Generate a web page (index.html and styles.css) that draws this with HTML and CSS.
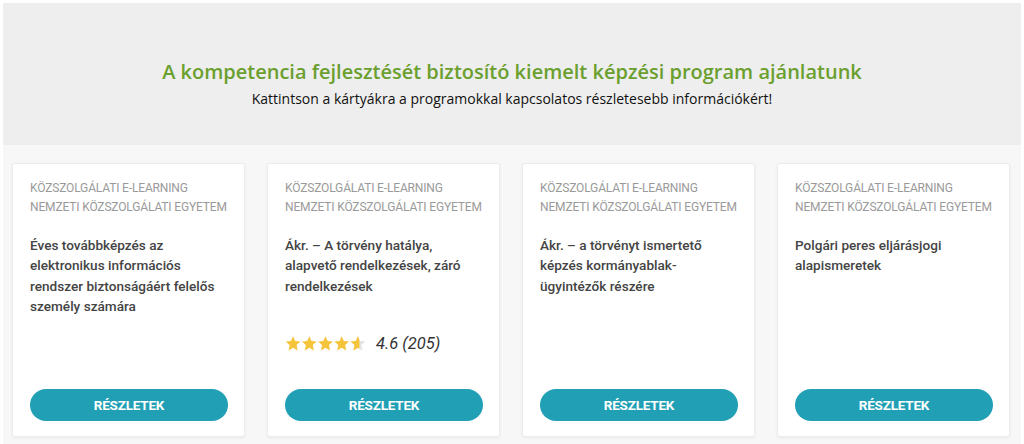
FILE: index.html
```html
<!DOCTYPE html>
<html lang="hu">
<head>
<meta charset="utf-8">
<link rel="stylesheet" href="styles.css">
</head>
<body>
<div class="page">
  <header class="hero">
    <h1 class="hero-title">A kompetencia fejlesztését biztosító kiemelt képzési program ajánlatunk</h1>
    <p class="hero-sub">Kattintson a kártyákra a programokkal kapcsolatos részletesebb információkért!</p>
  </header>
  <section class="cards">
    <article class="card">
      <div class="cat">KÖZSZOLGÁLATI E-LEARNING<br>NEMZETI KÖZSZOLGÁLATI EGYETEM</div>
      <h2 class="title">Éves továbbképzés az elektronikus információs rendszer biztonságáért felelős személy számára</h2>
      <a class="btn">RÉSZLETEK</a>
    </article>
    <article class="card">
      <div class="cat">KÖZSZOLGÁLATI E-LEARNING<br>NEMZETI KÖZSZOLGÁLATI EGYETEM</div>
      <h2 class="title">Ákr. – A törvény hatálya, alapvető rendelkezések, záró rendelkezések</h2>
      <div class="rating">
        <svg class="stars" width="81" height="17" viewBox="0 0 80 16">
          <defs>
            <path id="st" d="M8 0.8 L10.1 5.6 L15.3 6.1 L11.4 9.6 L12.5 14.8 L8 12.1 L3.5 14.8 L4.6 9.6 L0.7 6.1 L5.9 5.6 Z"/>
            <clipPath id="half"><rect x="0" y="0" width="9.5" height="16"/></clipPath>
          </defs>
          <use href="#st" x="0" fill="#f6c43a"/>
          <use href="#st" x="16" fill="#f6c43a"/>
          <use href="#st" x="32" fill="#f6c43a"/>
          <use href="#st" x="48" fill="#f6c43a"/>
          <use href="#st" x="64" fill="#e3e3e3"/>
          <g transform="translate(64 0)"><use href="#st" fill="#f6c43a" clip-path="url(#half)"/></g>
        </svg>
        <span class="score">4.6 (205)</span>
      </div>
      <a class="btn">RÉSZLETEK</a>
    </article>
    <article class="card">
      <div class="cat">KÖZSZOLGÁLATI E-LEARNING<br>NEMZETI KÖZSZOLGÁLATI EGYETEM</div>
      <h2 class="title">Ákr. – a törvényt ismertető képzés kormányablak-ügyintézők részére</h2>
      <a class="btn">RÉSZLETEK</a>
    </article>
    <article class="card">
      <div class="cat">KÖZSZOLGÁLATI E-LEARNING<br>NEMZETI KÖZSZOLGÁLATI EGYETEM</div>
      <h2 class="title">Polgári peres eljárásjogi alapismeretek</h2>
      <a class="btn">RÉSZLETEK</a>
    </article>
  </section>
</div>
</body>
</html>
```
FILE: styles.css
```css
* { box-sizing: border-box; }
html, body { margin: 0; padding: 0; background: #ffffff; }
body { font-family: Roboto, "Liberation Sans", Arial, sans-serif; }
.page {
  width: 1024px;
  height: 444px;
  padding: 3px 3px 0 3px;
  background: #ffffff;
  overflow: hidden;
}
.hero {
  background: #eeeeee;
  height: 142px;
  display: flex;
  flex-direction: column;
  align-items: center;
  padding-top: 55px;
}
.hero-title {
  margin: 0;
  font-family: "Open Sans", sans-serif;
  font-weight: 600;
  font-size: 20px;
  line-height: 27px;
  color: #6b9f2e;
}
.hero-sub {
  margin: 4px 0 0 0;
  font-family: "Open Sans", sans-serif;
  font-size: 14px;
  line-height: 20px;
  color: #111111;
}
.cards {
  background: #f7f7f7;
  display: flex;
  gap: 22px;
  padding: 18px 0 0 9px;
  height: 299px;
}
.card {
  width: 233px;
  height: 274px;
  background: #ffffff;
  border: 1px solid #ececec;
  border-radius: 3px;
  box-shadow: 0 1px 3px rgba(0,0,0,0.06);
  padding: 15px 16px 15px 17px;
  display: flex;
  flex-direction: column;
}
.cat {
  font-size: 12px;
  line-height: 19px;
  color: #9a9a9a;
  letter-spacing: -0.15px;
}
.title {
  margin: 18px 0 0 0;
  font-size: 13.6px;
  font-weight: 500;
  line-height: 20.4px;
  color: #444444;
}
.rating {
  margin-top: 38px;
  display: flex;
  align-items: center;
  gap: 10px;
}
.stars { display: block; }
.score {
  font-style: italic;
  font-size: 16.5px;
  color: #333333;
}
.btn {
  margin-top: auto;
  display: flex;
  align-items: center;
  justify-content: center;
  height: 32px;
  border-radius: 16px;
  background: #21a0b5;
  color: #ffffff;
  font-weight: 700;
  font-size: 13.5px;
  letter-spacing: -0.2px;
}
```
